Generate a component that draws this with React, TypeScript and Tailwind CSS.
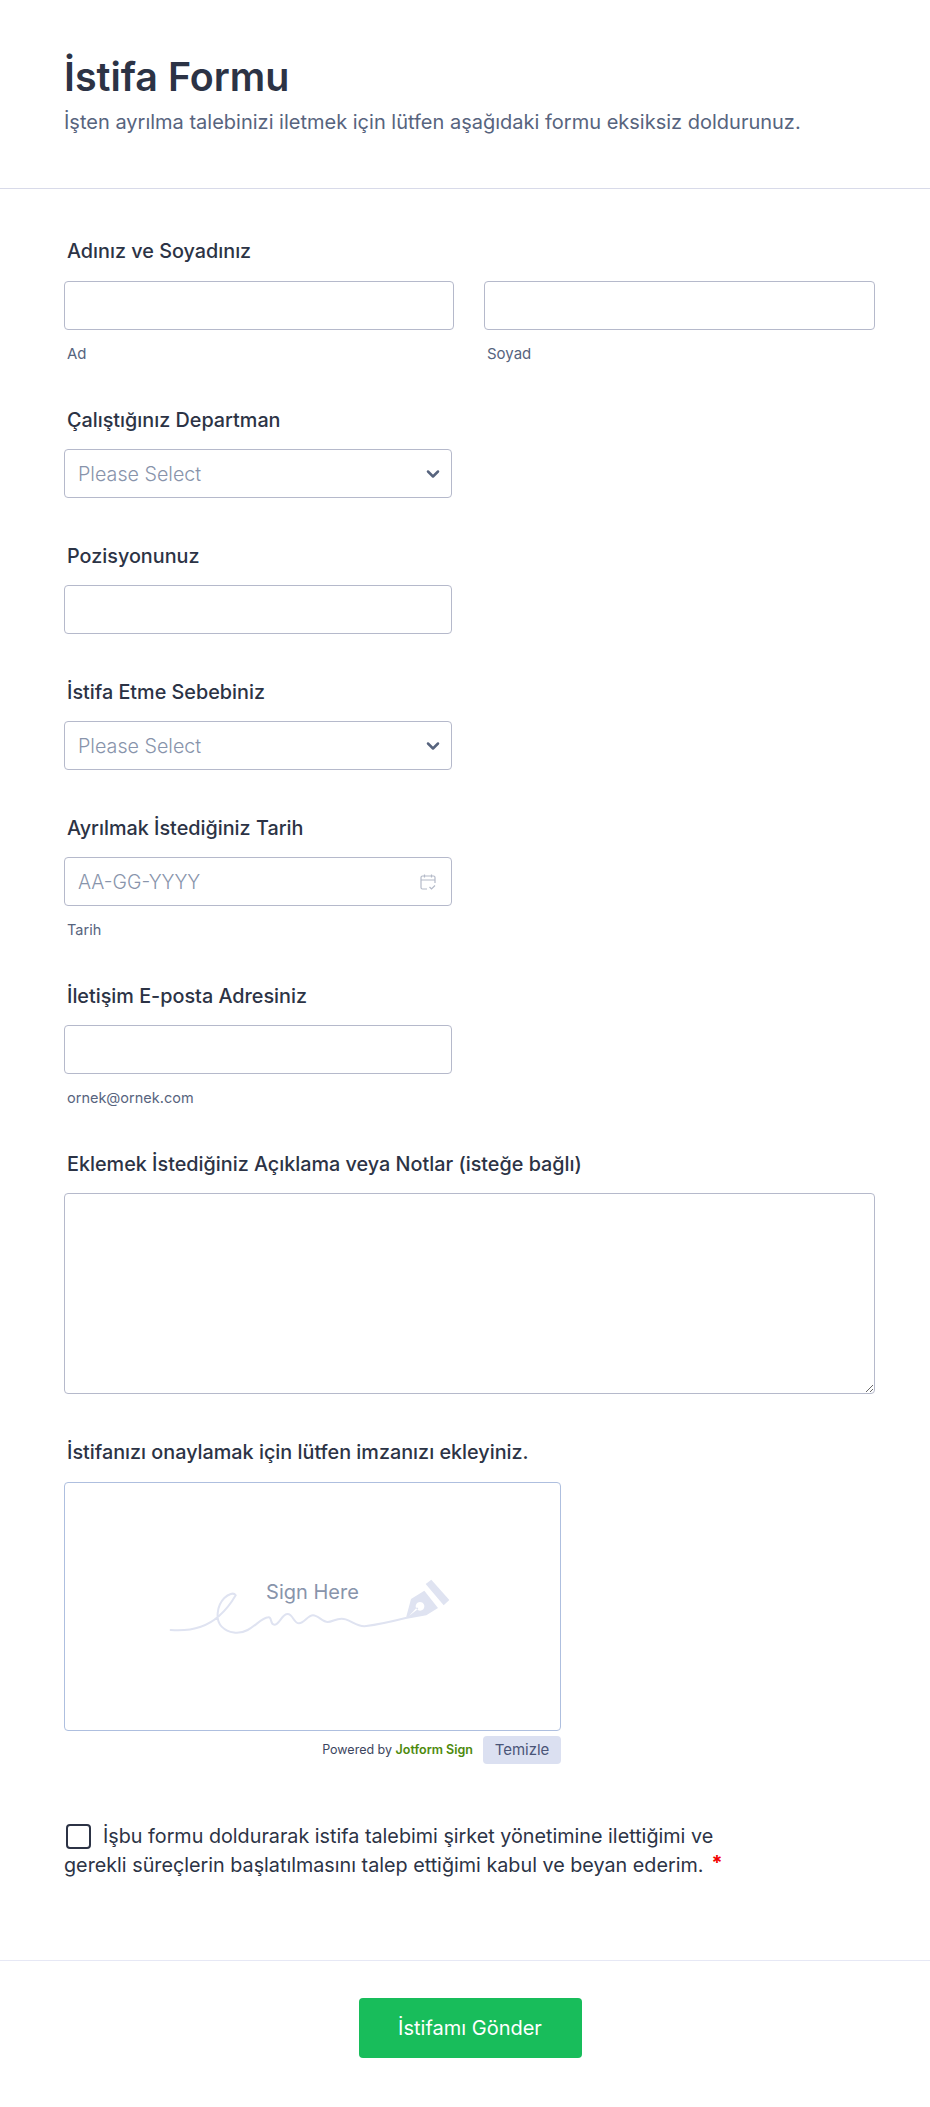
import { ChevronDown } from "lucide-react";

const inputCls = "block h-[49px] w-full rounded-[4px] border border-[#b5b9cb] bg-white px-[13px] text-[18px] outline-none";
const labelCls = "ml-[3px] block text-[19.8px] font-[450] leading-[26px] text-[#2c3345]";
const subCls = "ml-[3px] block text-[14.5px] leading-[18px] text-[#57647e]";

function CalendarIcon() {
  return (
    <svg viewBox="0 0 18 18" className="h-[18px] w-[18px]" fill="none" stroke="#b4bac8" strokeWidth="1.2">
      <path d="M8 16H3.5A1.5 1.5 0 0 1 2 14.5v-10A1.5 1.5 0 0 1 3.5 3h11A1.5 1.5 0 0 1 16 4.5V10" />
      <path d="M2 7h14M5.5 1.5v3M12.5 1.5v3" />
      <path d="M10.5 14l2 2 3.5-3.5" />
    </svg>
  );
}

function SelectField({ label, className }: { label: string; className: string }) {
  return (
    <div className={className}>
      <label className={labelCls}>{label}</label>
      <div className="mt-[16px] flex h-[49px] w-[388px] items-center justify-between rounded-[4px] border border-[#b5b9cb] bg-white pl-[13px] pr-[8px]">
        <span className="pt-[2px] text-[19.7px] font-light text-[#8894ab]">Please Select</span>
        <ChevronDown size={20} strokeWidth={3} color="#57647e" />
      </div>
    </div>
  );
}

function Signature() {
  return (
    <svg viewBox="0 0 1020 720" className="absolute left-[74px] top-[47px] h-[240px] w-[340px]" fill="none">
      <path
        d="M95 300c50 4 105-6 145-42 28-24 50-62 50-62-6-10-22-4-34 8-22 22-28 66-8 86 20 20 52 24 78 10 26-14 42-36 62-38 12-2 4 22 18 22 16 0 22-32 40-32 16 0 18 28 34 28 16 0 26-24 42-24s28 20 44 20 30-16 54-8c24 8 36 24 62 20 34-4 78-14 118-24"
        stroke="#dfe3f1"
        strokeWidth="6"
        strokeLinecap="round"
      />
      <path
        fillRule="evenodd"
        d="M800 267l16-60 40-25 41 52-35 22zM843 216a13 13 0 1 0 .1 0zM810 258l28-22-4-4z"
        fill="#dfe3f1"
      />
      <path d="M860 162l17-13 54 61-17 16z" fill="#dfe3f1" />
    </svg>
  );
}

export default function App() {
  return (
    <div className="h-[2107px] bg-white font-['Inter','Noto_Sans',sans-serif]">
      <header className="h-[189px] border-b border-[#d8dae9] px-[64px] pt-[50px]">
        <h1 className="text-[39.4px] font-semibold leading-[54px] text-[#2c3345]">İstifa Formu</h1>
        <p className="mt-[5px] text-[20px] leading-[26px] text-[#57647e]">
          İşten ayrılma talebinizi iletmek için lütfen aşağıdaki formu eksiksiz doldurunuz.
        </p>
      </header>

      <main className="px-[64px]">
        <div className="pt-[49px]">
          <label className={labelCls}>Adınız ve Soyadınız</label>
          <div className="mt-[17px] grid grid-cols-[390px_391px] gap-[30px]">
            <div>
              <input className={inputCls} />
              <span className={`${subCls} mt-[15px] !text-[15px]`}>Ad</span>
            </div>
            <div>
              <input className={inputCls} />
              <span className={`${subCls} mt-[15px] !text-[15px]`}>Soyad</span>
            </div>
          </div>
        </div>

        <SelectField className="mt-[44px]" label="Çalıştığınız Departman" />

        <div className="mt-[45px]">
          <label className={labelCls}>Pozisyonunuz</label>
          <input className={`${inputCls} mt-[16px] !w-[388px]`} />
        </div>

        <SelectField className="mt-[45px]" label="İstifa Etme Sebebiniz" />

        <div className="mt-[45px]">
          <label className={labelCls}>Ayrılmak İstediğiniz Tarih</label>
          <div className="mt-[16px] flex h-[49px] w-[388px] items-center justify-between rounded-[4px] border border-[#b5b9cb] bg-white pl-[13px] pr-[14px]">
            <span className="pt-[2px] text-[19.4px] font-light text-[#8894ab]">AA-GG-YYYY</span>
            <CalendarIcon />
          </div>
          <span className={`${subCls} mt-[15px]`}>Tarih</span>
        </div>

        <div className="mt-[44px]">
          <label className={labelCls}>İletişim E-posta Adresiniz</label>
          <input className={`${inputCls} mt-[16px] !w-[388px]`} />
          <span className={`${subCls} mt-[15px]`}>ornek@ornek.com</span>
        </div>

        <div className="mt-[44px]">
          <label className={labelCls}>Eklemek İstediğiniz Açıklama veya Notlar (isteğe bağlı)</label>
          <textarea className="mt-[16px] block h-[201px] w-[811px] rounded-[4px] border border-[#b5b9cb] bg-white outline-none" />
        </div>

        <div className="mt-[45px]">
          <label className={labelCls}>İstifanızı onaylamak için lütfen imzanızı ekleyiniz.</label>
          <div className="relative mt-[17px] flex h-[249px] w-[497px] justify-center rounded-[4px] border border-[#aebfdf] bg-white pt-[97px]">
            <span className="text-[20px] leading-[24px] text-[#8894ab]">Sign Here</span>
            <Signature />
          </div>
          <div className="mt-[5px] flex w-[497px] items-center justify-end gap-[10px]">
            <span className="text-[12.5px] text-[#3c4660]">
              Powered by <b className="font-semibold text-[#4d8a0c]">Jotform Sign</b>
            </span>
            <button type="button" className="h-[28px] w-[78px] rounded-[4px] bg-[#dbe0f1] text-[15px] text-[#4a5578]">
              Temizle
            </button>
          </div>
        </div>

        <div className="mt-[59px] w-[700px] text-[19.75px] leading-[27px] text-[#2c3345]">
          <input type="checkbox" className="ml-[2px] mr-[12px] inline-block h-[25px] w-[25px] appearance-none rounded-[4px] border-2 border-[#2c3345] bg-white align-[-6px]" />
          İşbu formu doldurarak istifa talebimi şirket yönetimine ilettiğimi ve gerekli süreçlerin başlatılmasını talep ettiğimi kabul ve beyan ederim.
          <span className="ml-[8px] align-[2px] font-bold text-[#f20000]">*</span>
        </div>
      </main>

      <footer className="mt-[81px] flex justify-center border-t border-[#e6e8f5] pl-[10px] pt-[37px]">
        <button type="button" className="h-[60px] w-[223px] rounded-[4px] bg-[#18bd5b] text-[20px] font-normal text-white">
          İstifamı Gönder
        </button>
      </footer>
    </div>
  );
}
